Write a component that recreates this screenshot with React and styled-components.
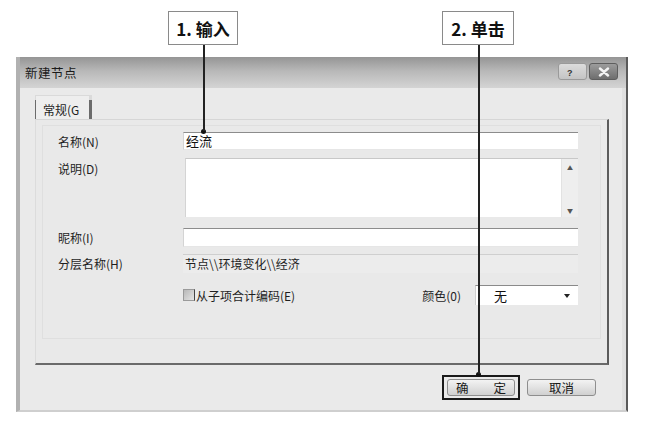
import React from "react";
import styled, { createGlobalStyle } from "styled-components";

const GlobalStyle = createGlobalStyle`
    html, body {
        margin: 0;
        padding: 0;
        background: #ffffff;
    }
    body {
        font-family: "Noto Sans CJK SC", "Liberation Sans", sans-serif;
        font-size: 12px;
        color: #1e1e1e;
    }
`;

export default function App() {
    return (
        <>
            <GlobalStyle />
            <Page>
                <Dialog>
                    <TitleBar>
                        <Title>新建节点</Title>
                        <TitleButtons>
                            <HelpButton>?</HelpButton>
                            <CloseButton>
                                <svg width="14" height="10" viewBox="0 0 14 10">
                                    <path
                                        d="M3 1.5 L11 8.5 M11 1.5 L3 8.5"
                                        stroke="#f4f4f4"
                                        strokeWidth="2.4"
                                        strokeLinecap="round"
                                    />
                                </svg>
                            </CloseButton>
                        </TitleButtons>
                    </TitleBar>

                    <Body>
                        <Tabs>
                            <Tab>常规(G</Tab>
                        </Tabs>
                        <Panel>
                            <Group>
                                <Row $height={18} $gap={8}>
                                    <Label>名称(N)</Label>
                                    <TextInput>经流</TextInput>
                                </Row>
                                <Row $height={59} $gap={11} $top>
                                    <Label $top>说明(D)</Label>
                                    <TextArea>
                                        <Scrollbar>
                                            <Arrow>▲</Arrow>
                                            <Arrow>▼</Arrow>
                                        </Scrollbar>
                                    </TextArea>
                                </Row>
                                <Row $height={19} $gap={7}>
                                    <Label>昵称(I)</Label>
                                    <TextInput />
                                </Row>
                                <Row $height={19} $gap={12}>
                                    <Label>分层名称(H)</Label>
                                    <ReadOnly>节点\\环境变化\\经济</ReadOnly>
                                </Row>
                                <Row $height={20} $gap={0}>
                                    <Label />
                                    <Options>
                                        <Check>
                                            <CheckBox />
                                            从子项合计编码(E)
                                        </Check>
                                        <ColorField>
                                            <span>颜色(0)</span>
                                            <Select>
                                                <span>无</span>
                                                <Caret />
                                            </Select>
                                        </ColorField>
                                    </Options>
                                </Row>
                            </Group>
                        </Panel>

                        <Actions>
                            <FocusRing>
                                <Button $wide>确　　定</Button>
                            </FocusRing>
                            <Button>取消</Button>
                        </Actions>
                    </Body>
                </Dialog>

                <Callout $left={168} $width={70} $line={86}>
                    1. 输入
                </Callout>
                <Callout $left={442} $width={72} $line={329}>
                    2. 单击
                </Callout>
            </Page>
        </>
    );
}

const Page = styled.div`
    position: relative;
    width: 650px;
    height: 423px;
    padding: 57px 0 0 16px;
    box-sizing: border-box;
    overflow: hidden;
`;

const Dialog = styled.div`
    width: 612px;
    height: 355px;
    box-sizing: border-box;
    display: flex;
    flex-direction: column;
    background: #eaeaea;
    border-left: 4px solid #b1b1b1;
    border-right: 2px solid #5a5a5a;
    border-bottom: 2px solid #cfcfcf;
    box-shadow: inset -4px 0 0 #e0e0e0;
`;

const TitleBar = styled.div`
    height: 31px;
    flex: none;
    display: flex;
    align-items: center;
    justify-content: space-between;
    padding: 0 8px 0 5px;
    background: linear-gradient(180deg, #959595 0%, #b8b8b8 45%, #d4d4d4 100%);
`;

const Title = styled.span`
    font-size: 12.5px;
    color: #1a1a1a;
    letter-spacing: 0.5px;
`;

const TitleButtons = styled.div`
    display: flex;
    gap: 2px;
    align-items: center;
    margin-top: -2px;
`;

const HelpButton = styled.div`
    width: 29px;
    height: 17px;
    box-sizing: border-box;
    border: 1px solid #9a9a9a;
    border-radius: 3px;
    background: linear-gradient(180deg, #dcdcdc, #c4c4c4);
    font-family: "Liberation Sans", sans-serif;
    font-size: 9px;
    font-weight: bold;
    color: #333;
    display: flex;
    align-items: flex-end;
    padding: 0 0 1px 8px;
`;

const CloseButton = styled.div`
    width: 29px;
    height: 17px;
    box-sizing: border-box;
    border: 1px solid #5e5e5e;
    border-radius: 3px;
    background: linear-gradient(180deg, #9c9c9c, #6e6e6e);
    display: flex;
    align-items: center;
    justify-content: center;
`;

const Body = styled.div`
    flex: 1;
    display: flex;
    flex-direction: column;
    padding: 7px 0 0 15px;
`;

const Tabs = styled.div`
    display: flex;
    height: 24px;
`;

const Tab = styled.div`
    width: 57px;
    box-sizing: border-box;
    padding: 5px 0 0 7px;
    font-size: 12px;
    color: #1e1e1e;
    background: #eeeeee;
    border-left: 1px solid #dadada;
    border-top: 1px solid #dadada;
    border-right: 3px solid #6b6b6b;
    border-image: linear-gradient(180deg, #dadada 0 20%, #6b6b6b 20% 100%) 1;
`;

const Panel = styled.div`
    width: 574px;
    height: 246px;
    box-sizing: border-box;
    border-top: 1px solid #d6d6d6;
    border-left: 1px solid #dcdcdc;
    border-right: 2px solid #5b5b5b;
    border-bottom: 2px solid #6a6a6a;
    padding: 5px 6px 0 6px;
    background: #e9e9e9;
`;

const Group = styled.div`
    height: 214px;
    box-sizing: border-box;
    border: 1px solid #dfdfdf;
    padding: 6px 22px 0 15px;
`;

const Row = styled.div`
    display: grid;
    grid-template-columns: 125px 1fr;
    align-items: ${(p) => (p.$top ? "start" : "center")};
    height: ${(p) => p.$height}px;
    margin-bottom: ${(p) => p.$gap}px;
`;

const Label = styled.div`
    font-size: 12px;
    color: #1e1e1e;
    padding-top: ${(p) => (p.$top ? "2px" : "0")};
`;

const TextInput = styled.div`
    height: 100%;
    box-sizing: border-box;
    background: #ffffff;
    border-top: 1px solid #8c8c8c;
    border-left: 1px solid #d4d4d4;
    border-bottom: 1px solid #e6e6e6;
    padding: 0 2px;
    font-size: 13px;
    line-height: 16px;
    color: #111;
`;

const TextArea = styled.div`
    height: 100%;
    box-sizing: border-box;
    background: #ffffff;
    border-top: 1px solid #c8c8c8;
    border-left: 1px solid #d4d4d4;
    margin-left: 2px;
    display: flex;
    justify-content: flex-end;
`;

const Scrollbar = styled.div`
    width: 16px;
    background: #eeeeee;
    border-left: 1px solid #e2e2e2;
    display: flex;
    flex-direction: column;
    justify-content: space-between;
    align-items: center;
    padding: 5px 0 2px;
`;

const Arrow = styled.span`
    font-size: 6px;
    color: #555;
    line-height: 8px;
`;

const ReadOnly = styled.div`
    height: 100%;
    box-sizing: border-box;
    background: #ececec;
    border-top: 1px solid #cfcfcf;
    padding: 0 2px;
    font-size: 12px;
    line-height: 17px;
    color: #1e1e1e;
`;

const Options = styled.div`
    display: flex;
    align-items: center;
    justify-content: space-between;
    height: 100%;
`;

const Check = styled.label`
    display: flex;
    align-items: center;
    font-size: 12px;
    color: #1e1e1e;
`;

const CheckBox = styled.span`
    width: 10px;
    height: 10px;
    margin-right: 1px;
    background: linear-gradient(135deg, #b8b8b8, #e4e4e4);
    border: 1px solid #9a9a9a;
    border-right-color: #444;
`;

const ColorField = styled.div`
    display: flex;
    align-items: center;
    gap: 14px;
    height: 100%;
    font-size: 12px;
    color: #1e1e1e;
`;

const Select = styled.div`
    width: 103px;
    height: 100%;
    box-sizing: border-box;
    background: #ffffff;
    border-top: 1px solid #8a8a8a;
    border-left: 1px solid #cfcfcf;
    display: flex;
    align-items: center;
    justify-content: space-between;
    padding: 0 8px 0 18px;
    font-size: 13px;
    color: #111;
`;

const Caret = styled.span`
    width: 0;
    height: 0;
    border-left: 3.5px solid transparent;
    border-right: 3.5px solid transparent;
    border-top: 4px solid #222;
`;

const Actions = styled.div`
    display: flex;
    align-items: center;
    gap: 7px;
    padding: 10px 0 0 407px;
`;

const FocusRing = styled.div`
    border: 2px solid #1a1a1a;
    padding: 2px 3px;
    display: flex;
`;

const Button = styled.div`
    width: ${(p) => (p.$wide ? "68px" : "69px")};
    height: 17px;
    box-sizing: border-box;
    border: 1px solid #8e8e8e;
    border-radius: 3px;
    background: linear-gradient(180deg, #f3f3f3 0%, #e2e2e2 50%, #d0d0d0 100%);
    display: flex;
    align-items: center;
    justify-content: center;
    font-size: 12.5px;
    color: #1a1a1a;
`;

const Callout = styled.div`
    position: absolute;
    top: 11px;
    left: ${(p) => p.$left}px;
    width: ${(p) => p.$width}px;
    height: 34px;
    box-sizing: border-box;
    border: 1px solid #8a8a8a;
    background: #ffffff;
    display: flex;
    align-items: center;
    justify-content: center;
    font-family: "Noto Sans CJK SC", "Liberation Sans", sans-serif;
    font-weight: bold;
    font-size: 17px;
    color: #111;

    &::after {
        content: "";
        position: absolute;
        top: 33px;
        left: 50%;
        width: 1.5px;
        height: ${(p) => p.$line}px;
        background: #222;
    }

    &::before {
        content: "";
        position: absolute;
        top: ${(p) => 31 + p.$line}px;
        left: calc(50% - 2px);
        width: 5px;
        height: 5px;
        border-radius: 50%;
        background: #111;
    }
`;
